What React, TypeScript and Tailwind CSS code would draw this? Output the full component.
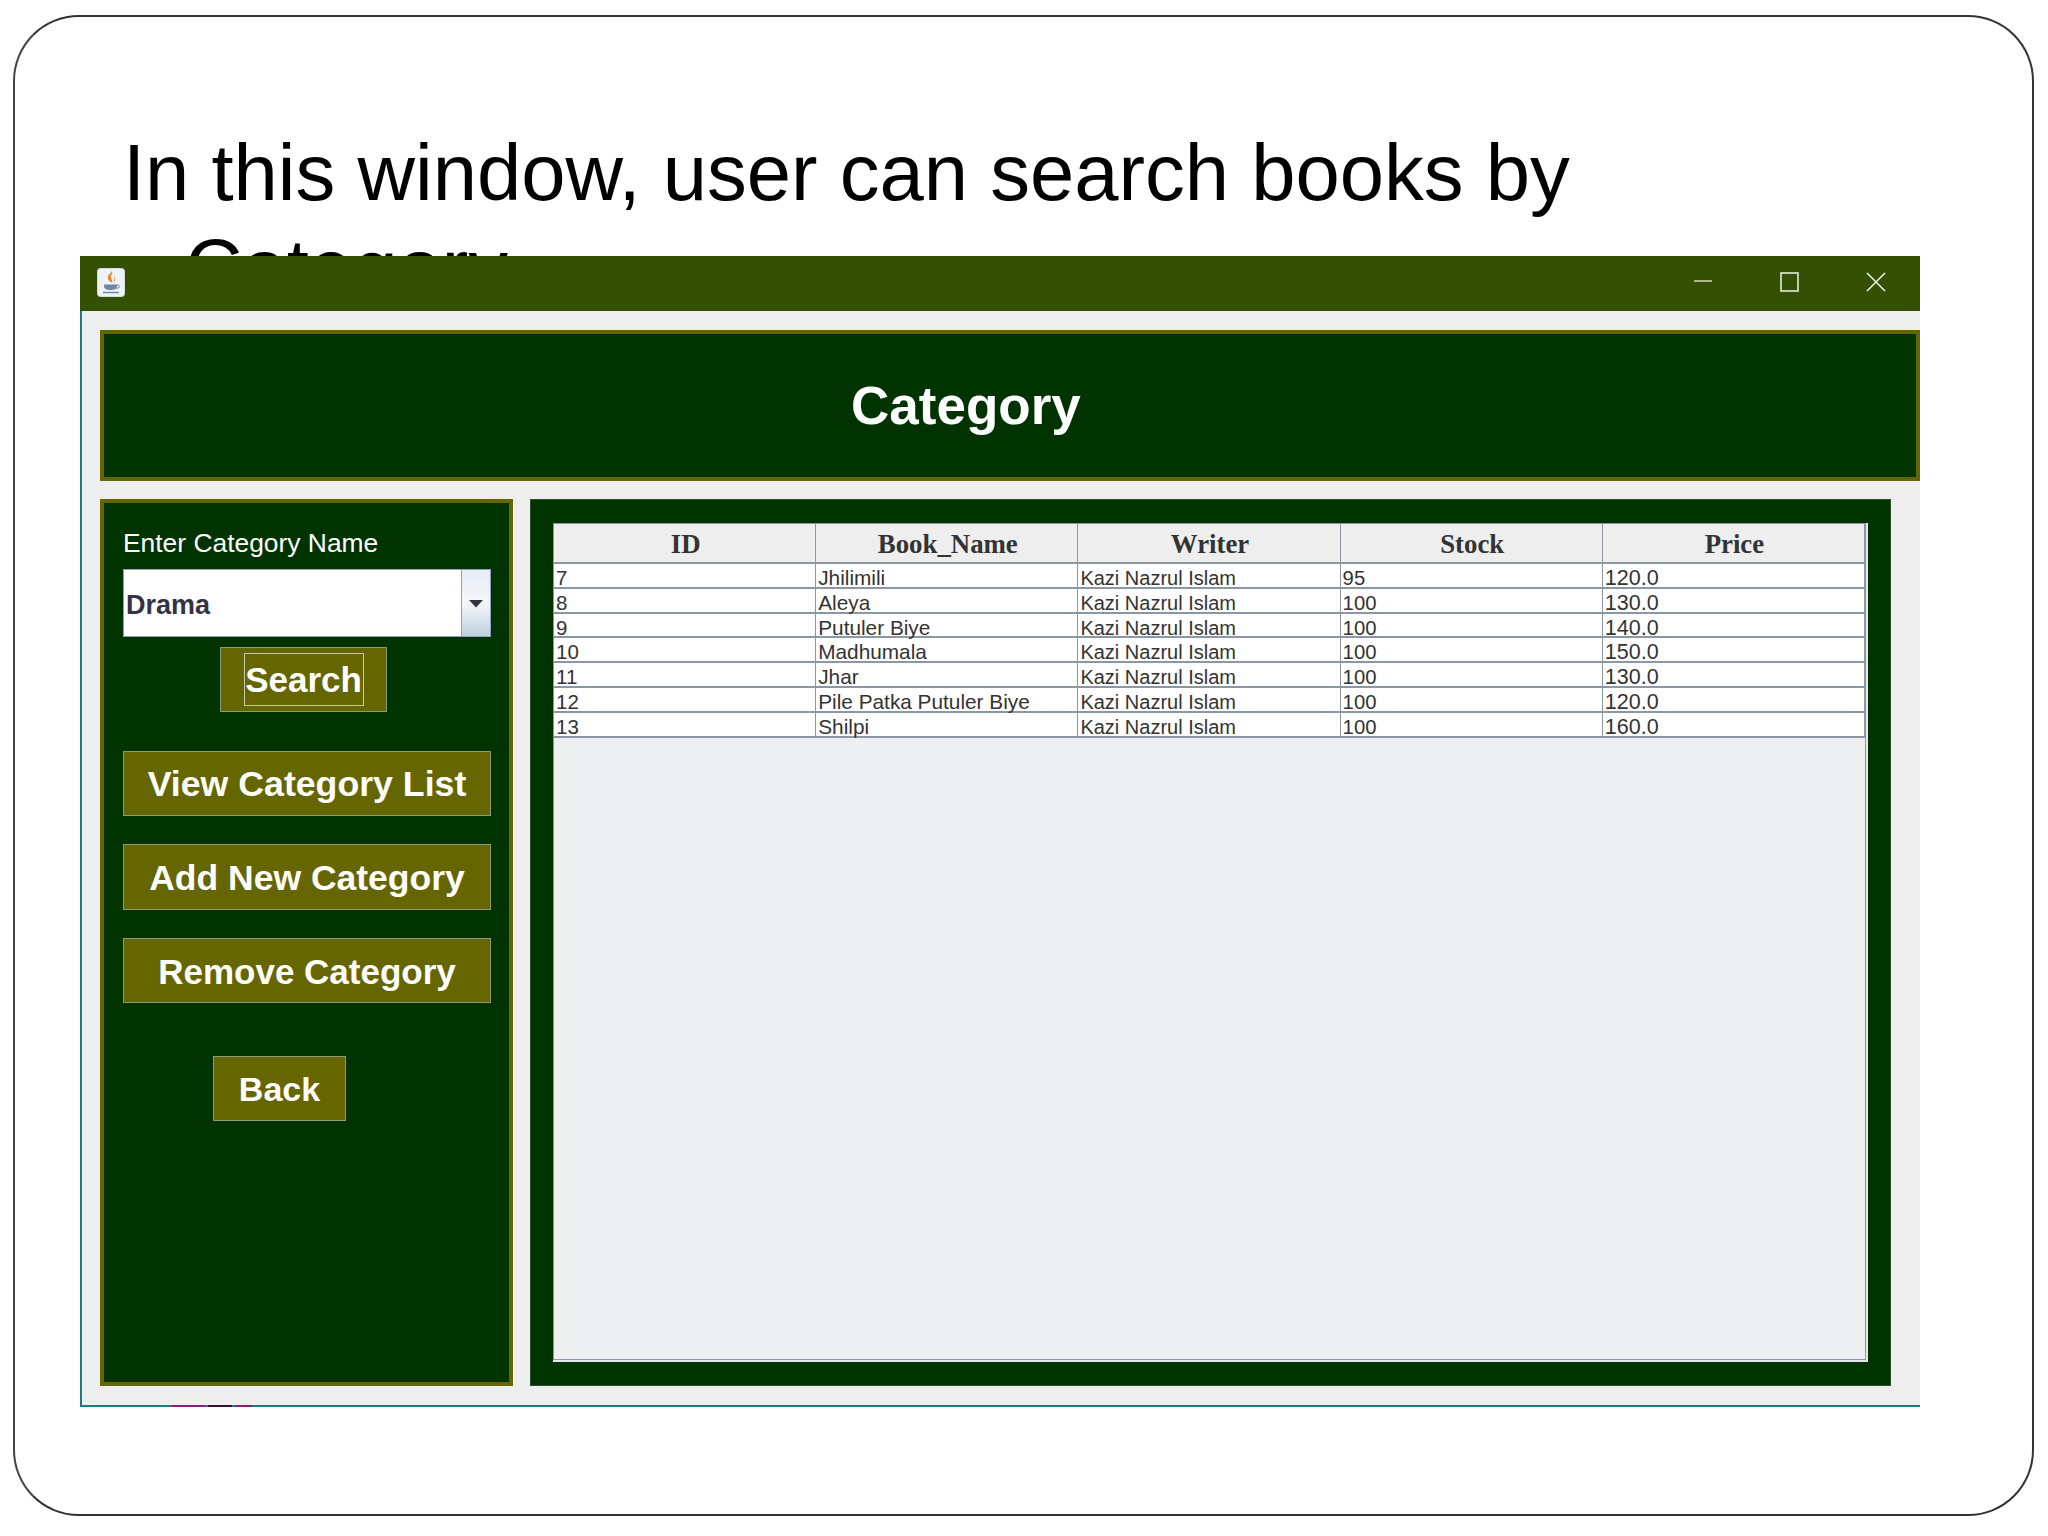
const rows = [
  ["7", "Jhilimili", "Kazi Nazrul Islam", "95", "120.0"],
  ["8", "Aleya", "Kazi Nazrul Islam", "100", "130.0"],
  ["9", "Putuler Biye", "Kazi Nazrul Islam", "100", "140.0"],
  ["10", "Madhumala", "Kazi Nazrul Islam", "100", "150.0"],
  ["11", "Jhar", "Kazi Nazrul Islam", "100", "130.0"],
  ["12", "Pile Patka Putuler Biye", "Kazi Nazrul Islam", "100", "120.0"],
  ["13", "Shilpi", "Kazi Nazrul Islam", "100", "160.0"],
];
const headers = ["ID", "Book_Name", "Writer", "Stock", "Price"];
const columnText = ["text-[20.500px]", "text-[20.800px]", "text-[20px]", "text-[20.300px]", "text-[21.500px]"];

function JavaIcon() {
  return (
    <svg width="28" height="29" viewBox="0 0 28 29" className="mb-[3px] ml-[17px]">
      <rect x="0.5" y="0.5" width="27" height="28" rx="3" fill="#eef3f7" stroke="#d5dce0" />
      <path d="M14.500 3c2.500 2.500-1.500 4-.5 6.500.5 1.500 1.500 2.500 1 5-3-1-5-3.500-4-6.500.6-2 3.500-2.500 3.500-5z" fill="#e8853a" />
      <path d="M17 8c.8 2.500-.5 4-.8 6.500 2-1 3-4 .8-6.500z" fill="#eea768" />
      <path d="M7 16.500h13v1.500c0 3-2.500 4-6.500 4S7 21 7 18z" fill="#6f88a6" />
      <path d="M20 17c3-.5 3.500 3-.5 3.500" fill="none" stroke="#5f7a99" strokeWidth="1" />
      <path d="M6 24.500h16" stroke="#6d88a6" strokeWidth="1.500" />
    </svg>
  );
}

function SideButton({ label, className }: { label: string; className: string }) {
  return (
    <div className={`flex items-center justify-center border border-[#8c9a84] bg-[#666600] font-bold text-white ${className}`}>
      {label}
    </div>
  );
}

export default function App() {
  return (
    <div className="h-[1536px] w-[2048px] overflow-hidden bg-white pl-[13px] pt-[15px] font-['Liberation_Sans',sans-serif]">
      <div className="h-[1501px] w-[2021px] rounded-[66px] border-2 border-[#333333] border-l-[#444444]">
        <div className="h-[239px] pl-[108px] pt-[108px] text-[79.600px] leading-[95px] text-black">
          <div className="whitespace-nowrap">In this window, user can search books by</div>
          <div className="whitespace-nowrap pl-[62px]">Category</div>
        </div>

        <div className="relative ml-[65px] h-[1151px] w-[1840px] border-b-2 border-l-2 border-[#1b7d80] bg-[#eeeeee]">
          <div className="absolute bottom-[-2px] left-[90px] flex h-[2px] gap-[3px]">
            <div className="w-[33px] bg-[#8d1b7a]" />
            <div className="w-[24px] bg-[#3a1030]" />
            <div className="w-[17px] bg-[#8d1b7a]" />
          </div>
          <div className="-ml-[2px] flex h-[55px] items-center justify-between bg-[#335003]">
            <JavaIcon />
            <div className="mb-[3px] flex items-center">
              <svg width="20" height="20" viewBox="0 0 20 20" className="mr-[66px]"><path d="M1 9h18" stroke="#e8f0dc" strokeWidth="1.300" /></svg>
              <svg width="20" height="20" viewBox="0 0 20 20" className="mr-[66px]"><rect x="2" y="1" width="17" height="18" fill="none" stroke="#f0f5e8" strokeWidth="1.500" /></svg>
              <svg width="22" height="22" viewBox="0 0 22 22" className="mr-[33px]"><path d="M2 2l18 18M20 2L2 20" stroke="#f0f5e8" strokeWidth="1.500" /></svg>
            </div>
          </div>

          <div className="ml-[18px] mt-[19px] flex h-[151px] items-center border-4 border-[#666600] bg-[#003300] pl-[747px] text-[53px] font-bold text-white">
            Category
          </div>

          <div className="ml-[18px] mt-[18px] flex h-[887px] gap-[17px]">
            <div className="flex w-[413px] flex-col border-4 border-[#666600] bg-[#003300] pl-[19px]">
              <div className="mt-[20px] h-[46px] text-[26.400px] leading-[40px] text-white">Enter Category Name</div>
              <div className="flex h-[68px] w-[368px] border border-[#8ea3ba] bg-white">
                <div className="flex flex-1 items-center pl-[2px] pt-[4px] text-[27px] font-bold text-[#333344]">Drama</div>
                <div className="flex w-[29px] items-center justify-center border-l border-[#8ea3ba] bg-gradient-to-b from-[#e6ecf4] via-[#f4f7fa] to-[#c0d0e0]">
                  <svg width="16" height="9" viewBox="0 0 16 9"><path d="M1 1h14L8 8.500z" fill="#333344" /></svg>
                </div>
              </div>
              <div className="ml-[97px] mt-[10px] flex h-[65px] w-[167px] items-center justify-center border border-[#8c9a84] bg-[#666600]">
                <div className="flex h-[53px] w-[120px] items-center justify-center border border-[#c4c9b0] pt-[2px] text-[35px] font-bold text-white">Search</div>
              </div>
              <SideButton label="View Category List" className="mt-[39px] h-[65px] w-[368px] pt-[3px] text-[35.700px]" />
              <SideButton label="Add New Category" className="mt-[28px] h-[66px] w-[368px] pt-[3px] text-[35.500px]" />
              <SideButton label="Remove Category" className="mt-[28px] h-[65px] w-[368px] pt-[3px] text-[35px]" />
              <SideButton label="Back" className="ml-[90px] mt-[53px] h-[65px] w-[133px] pt-[1px] text-[34px]" />
            </div>

            <div className="flex w-[1361px] border border-[#2e4f2e] bg-[#003300] pb-[23px] pl-[22px] pr-[22px] pt-[23px]">
              <div className="flex-1 border-b-2 border-r-2 border-[#e4e8ec]">
                <div className="h-full border border-[#8b97a3] bg-[#eeeff1]">
                  <div className="flex h-[40px] border-b-2 border-[#8b97a3]">
                    {headers.map((h) => (
                      <div key={h} className="flex flex-1 items-center justify-center border-r border-[#8b97a3] bg-[#eeeeee] pl-[2px] pt-[3px] font-['Liberation_Serif',serif] text-[26.800px] font-bold text-[#333333]">
                        {h}
                      </div>
                    ))}
                  </div>
                  {rows.map((r) => (
                    <div key={r[0]} className="flex h-[24.830px] border-b-2 border-[#8b97a3] bg-white">
                      {r.map((c, i) => (
                        <div key={i} className={`flex-1 whitespace-nowrap border-r border-[#8b97a3] pl-[2px] leading-[24px] text-[#333333] ${columnText[i]}`}>
                          <div className="translate-y-[2px]">{c}</div>
                        </div>
                      ))}
                    </div>
                  ))}
                </div>
              </div>
            </div>
          </div>
        </div>
      </div>
    </div>
  );
}
